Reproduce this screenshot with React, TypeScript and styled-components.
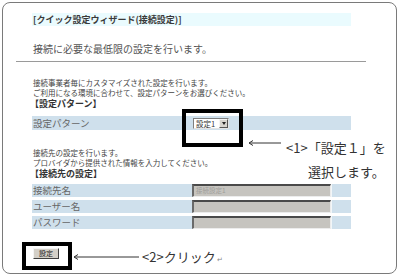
import React from 'react';
import styled, { createGlobalStyle } from 'styled-components';

const Global = createGlobalStyle`
  html, body { margin: 0; padding: 0; background: #fff; }
  body { font-family: "Noto Sans CJK JP", "Noto Sans", sans-serif; }
  * { box-sizing: border-box; }
`;

const Frame = styled.div`
  position: relative;
  margin: 2px 0 0 2px;
  width: 395px;
  height: 272px;
  border: 1px solid #7a7a7a;
  border-radius: 8px;
  padding: 10px 0 0 13px;
  display: flex;
  flex-direction: column;
`;

const Panel = styled.div`
  margin-left: 16px;
  width: 319px;
  display: flex;
  flex-direction: column;
`;

const TitleBar = styled.div`
  height: 13px;
  background: #eafbfe;
  font-size: 9px;
  font-weight: 700;
  line-height: 13px;
  color: #3a3a3a;
  padding-left: 1px;
  white-space: nowrap;
`;

const Description = styled.div`
  margin-top: 17px;
  font-size: 10px;
  line-height: 12px;
  color: #555;
  padding-left: 1px;
  white-space: nowrap;
`;

const Divider = styled.div`
  margin-top: 6px;
  width: 350px;
  height: 1px;
  background: #9a9a9a;
`;

const Note = styled.div<{ $top: number }>`
  margin-top: ${p => p.$top}px;
  font-size: 7.5px;
  line-height: 10px;
  color: #444;
  padding-left: 1px;
  white-space: nowrap;
`;

const Heading = styled.div<{ $top: number }>`
  margin-top: ${p => p.$top}px;
  font-size: 9px;
  font-weight: 700;
  line-height: 11px;
  color: #333;
  margin-left: -2px;
  white-space: nowrap;
`;

const PatternRow = styled.div`
  margin-top: 7px;
  height: 14px;
  background: #cfe0ec;
  display: grid;
  grid-template-columns: 161px 1fr;
  align-items: center;
`;

const Label = styled.div`
  font-size: 9.5px;
  line-height: 13px;
  color: #666;
  padding-left: 1px;
  white-space: nowrap;
`;

const Select = styled.div`
  width: 36px;
  height: 11px;
  margin-top: 1px;
  border: 1px solid;
  border-color: #7f7f7f #e4e4e4 #e4e4e4 #7f7f7f;
  background: #fff;
  display: flex;
  align-items: center;
  font-size: 7.5px;
  line-height: 9px;
  color: #333;
  padding-left: 2px;
`;

const SelectArrow = styled.div`
  margin-left: auto;
  width: 9px;
  height: 9px;
  background: #d8d5cf;
  border: 1px solid;
  border-color: #f4f4f4 #555 #555 #f4f4f4;
  display: flex;
  align-items: center;
  justify-content: center;
  &::after {
    content: '';
    border-left: 2.5px solid transparent;
    border-right: 2.5px solid transparent;
    border-top: 3px solid #222;
  }
`;

const Fields = styled.div`
  margin-top: 5px;
  display: flex;
  flex-direction: column;
  gap: 3px;
`;

const FieldRow = styled.div`
  height: 13px;
  display: grid;
  grid-template-columns: 160px 139px 20px;
`;

const LabelCell = styled.div`
  background: #cfe0ec;
  display: flex;
  align-items: center;
`;

const InputCell = styled.div`
  background: #c6c4bf;
  border-style: solid;
  border-width: 2px 1px 1px 2px;
  border-color: #4a4a4a #ececec #ececec #6a6a6a;
  font-size: 6.5px;
  line-height: 9px;
  color: #a09e9a;
  padding-left: 2px;
  white-space: nowrap;
  overflow: hidden;
`;

const EndCell = styled.div`
  background: #cfe0ec;
  border-left: 1px solid #f2f6f8;
`;

const SubmitButton = styled.div`
  margin-top: 19px;
  margin-left: 1px;
  width: 26px;
  height: 11px;
  background: #d4d0c8;
  border: 1px solid;
  border-color: #f4f4f4 #404040 #404040 #f4f4f4;
  font-size: 7px;
  line-height: 9px;
  color: #222;
  text-align: center;
`;

const HighlightBox = styled.div<{ $x: number; $y: number; $w: number; $h: number }>`
  position: absolute;
  left: ${p => p.$x}px;
  top: ${p => p.$y}px;
  width: ${p => p.$w}px;
  height: ${p => p.$h}px;
  border: 4px solid #000;
`;

const Callout = styled.div<{ $x: number; $y: number }>`
  position: absolute;
  left: ${p => p.$x}px;
  top: ${p => p.$y}px;
  font-size: 13px;
  line-height: 16px;
  color: #333;
  white-space: nowrap;
`;

const ReturnMark = styled.span`
  font-size: 7px;
  color: #888;
  margin-left: 1px;
`;

const ArrowSvg = styled.svg<{ $x: number; $y: number }>`
  position: absolute;
  left: ${p => p.$x}px;
  top: ${p => p.$y}px;
`;

function LeftArrow({ x, y, w }: { x: number; y: number; w: number }) {
  return (
    <ArrowSvg $x={x} $y={y} width={w} height={8} viewBox={`0 0 ${w} 8`}>
      <line x1={1} y1={4} x2={w} y2={4} stroke="#333" strokeWidth={1} />
      <path d="M1 4 L5 1.5 M1 4 L5 6.5" stroke="#333" strokeWidth={1} fill="none" />
    </ArrowSvg>
  );
}

export default function App() {
  return (
    <>
      <Global />
      <Frame>
        <Panel>
          <TitleBar>[クイック設定ウィザード(接続設定)]</TitleBar>
          <Description>接続に必要な最低限の設定を行います。</Description>
        </Panel>
        <Divider />
        <Panel>
          <Note $top={16}>接続事業者毎にカスタマイズされた設定を行います。</Note>
          <Note $top={0}>ご利用になる環境に合わせて、設定パターンをお選びください。</Note>
          <Heading $top={0}>【設定パターン】</Heading>
          <PatternRow>
            <Label>設定パターン</Label>
            <Select>
              設定1
              <SelectArrow />
            </Select>
          </PatternRow>
          <Note $top={18}>接続先の設定を行います。</Note>
          <Note $top={0}>プロバイダから提供された情報を入力してください。</Note>
          <Heading $top={0}>【接続先の設定】</Heading>
          <Fields>
            <FieldRow>
              <LabelCell><Label>接続先名</Label></LabelCell>
              <InputCell>接続設定1</InputCell>
              <EndCell />
            </FieldRow>
            <FieldRow>
              <LabelCell><Label>ユーザー名</Label></LabelCell>
              <InputCell />
              <EndCell />
            </FieldRow>
            <FieldRow>
              <LabelCell><Label>パスワード</Label></LabelCell>
              <InputCell />
              <EndCell />
            </FieldRow>
          </Fields>
          <SubmitButton>設定</SubmitButton>
        </Panel>

        <HighlightBox $x={179} $y={106} $w={61} $h={38} />
        <LeftArrow x={245} y={136} w={33} />
        <Callout $x={283} $y={137}>&lt;1&gt;「設定１」を</Callout>
        <Callout $x={305} $y={161}>選択します。</Callout>

        <HighlightBox $x={19} $y={239} $w={50} $h={28} />
        <LeftArrow x={70} y={250} w={66} />
        <Callout $x={139} $y={246}>&lt;2&gt;クリック<ReturnMark>↵</ReturnMark></Callout>
      </Frame>
    </>
  );
}
